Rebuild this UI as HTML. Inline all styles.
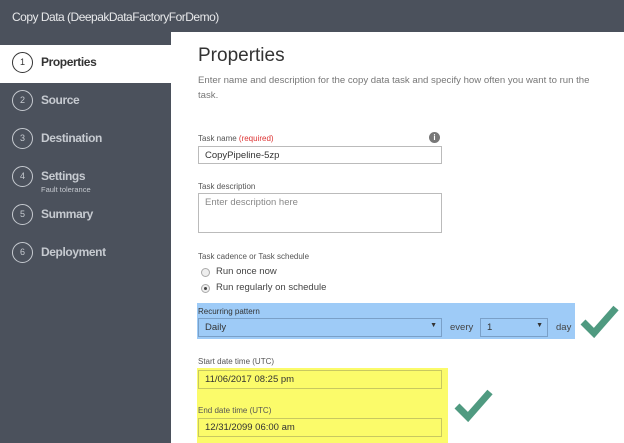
<!DOCTYPE html>
<html><head><style>
*{margin:0;padding:0;box-sizing:border-box}
body{width:624px;height:443px;position:relative;overflow:hidden;background:#fff;font-family:"Liberation Sans",sans-serif}
.a{position:absolute}
.hdr{left:0;top:0;width:624px;height:32px;background:#4b515c;color:#e8e9eb;font-size:12px;letter-spacing:-0.5px;padding:10px 0 0 12px}
.side{left:0;top:32px;width:171px;height:411px;background:#4b515c}
.act{left:0;top:45px;width:171px;height:38px;background:#fff}
.it{left:12px;height:22px;color:#c6cad0;font-size:12px;font-weight:bold;letter-spacing:-0.4px}
.it .c{position:absolute;left:0;top:0;width:21px;height:21px;border:1.3px solid #c6cad0;border-radius:50%;font-size:9px;font-weight:normal;text-align:center;line-height:19px;letter-spacing:0}
.it .t{position:absolute;left:29px;top:3px;white-space:nowrap}
.lbl{font-size:8px;color:#555;white-space:nowrap}
.inp{border:1px solid #bbb;background:#fff;font-size:9.5px;color:#333;padding:3px 6px}
</style></head><body>
<div class="a hdr">Copy Data (DeepakDataFactoryForDemo)</div>
<div class="a side"></div>
<div class="a act"></div>
<div class="a it" style="top:52px;color:#333"><div class="c" style="border-color:#333">1</div><div class="t">Properties</div></div>
<div class="a it" style="top:90px"><div class="c">2</div><div class="t">Source</div></div>
<div class="a it" style="top:128px"><div class="c">3</div><div class="t">Destination</div></div>
<div class="a it" style="top:166px"><div class="c">4</div><div class="t">Settings</div><div class="a" style="left:29px;top:19px;font-size:7.5px;font-weight:normal;white-space:nowrap;letter-spacing:0">Fault tolerance</div></div>
<div class="a it" style="top:204px"><div class="c">5</div><div class="t">Summary</div></div>
<div class="a it" style="top:242px"><div class="c">6</div><div class="t">Deployment</div></div>

<div class="a" style="left:198px;top:45px;font-size:19px;color:#333">Properties</div>
<div class="a" style="left:198px;top:73px;width:400px;font-size:9.6px;color:#777;line-height:15px">Enter name and description for the copy data task and specify how often you want to run the task.</div>

<div class="a lbl" style="left:198px;top:134px">Task name <span style="color:#d33">(required)</span></div>
<div class="a" style="left:429px;top:132px;width:11px;height:11px;border-radius:50%;background:#777;color:#fff;font-size:8px;font-weight:bold;text-align:center;line-height:11px">i</div>
<div class="a inp" style="left:198px;top:146px;width:244px;height:18px">CopyPipeline-5zp</div>
<div class="a lbl" style="left:198px;top:182px">Task description</div>
<div class="a inp" style="left:198px;top:193px;width:244px;height:40px;color:#888">Enter description here</div>
<div class="a lbl" style="left:198px;top:252px">Task cadence or Task schedule</div>
<div class="a" style="left:201px;top:268px;width:9px;height:9px;border:1px solid #aaa;border-radius:50%;background:#eee"></div>
<div class="a" style="left:216px;top:266px;font-size:9.5px;color:#444">Run once now</div>
<div class="a" style="left:201px;top:284px;width:9px;height:9px;border:1px solid #aaa;border-radius:50%;background:#eee"><div class="a" style="left:2px;top:2px;width:3px;height:3px;border-radius:50%;background:#444"></div></div>
<div class="a" style="left:216px;top:282px;font-size:9.5px;color:#444">Run regularly on schedule</div>

<div class="a" style="left:197px;top:303px;width:378px;height:36px;background:#9ecbf7"></div>
<div class="a lbl" style="left:198px;top:307px;color:#333">Recurring pattern</div>
<div class="a inp" style="left:198px;top:318px;width:244px;height:19px;background:#9ecbf7;border-color:#7aa0c8">Daily<span style="position:absolute;right:4px;top:3px;font-size:7px">▼</span></div>
<div class="a" style="left:450px;top:322px;font-size:9.5px;color:#444">every</div>
<div class="a inp" style="left:480px;top:318px;width:68px;height:19px;background:#9ecbf7;border-color:#7aa0c8">1<span style="position:absolute;right:4px;top:3px;font-size:7px">▼</span></div>
<div class="a" style="left:556px;top:322px;font-size:9.5px;color:#444">day</div>
<svg class="a" style="left:578px;top:302px" width="42" height="36"><path d="M5 20 L16 31 L38 6" stroke="#4f9a80" stroke-width="7" fill="none"/></svg>

<div class="a lbl" style="left:198px;top:357px">Start date time (UTC)</div>
<div class="a" style="left:197px;top:368px;width:251px;height:75px;background:#fbfb6a"></div>
<div class="a inp" style="left:198px;top:370px;width:244px;height:19px;background:#fbfb6a;border-color:#c8c860">11/06/2017 08:25 pm</div>
<div class="a lbl" style="left:198px;top:406px">End date time (UTC)</div>
<div class="a inp" style="left:198px;top:418px;width:244px;height:19px;background:#fbfb6a;border-color:#c8c860">12/31/2099 06:00 am</div>
<svg class="a" style="left:452px;top:386px" width="42" height="36"><path d="M5 20 L16 31 L38 6" stroke="#4f9a80" stroke-width="7" fill="none"/></svg>
</body></html>
